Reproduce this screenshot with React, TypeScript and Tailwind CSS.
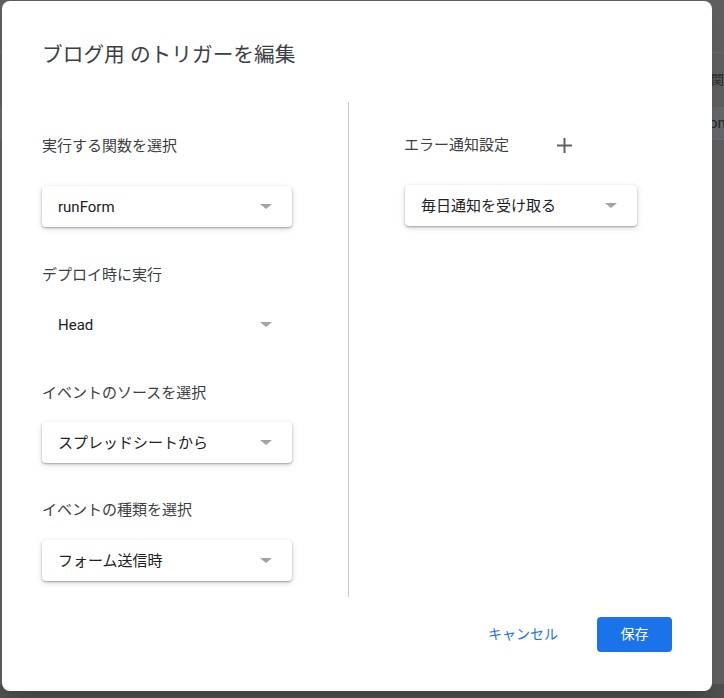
const font = "font-['Roboto','Noto_Sans_CJK_JP',sans-serif]";

function Caret() {
  return <span className="h-0 w-0 border-x-[6px] border-t-[5px] border-x-transparent border-t-[#a3a3a3]" />;
}

function Select({ value, width, boxed = true }: { value: string; width: string; boxed?: boolean }) {
  return (
    <div
      className={`flex h-[41px] items-center justify-between pl-4 pr-5 ${width} ${
        boxed ? "rounded-[4px] bg-white shadow-[0_1px_2px_rgba(0,0,0,0.3),0_2px_6px_rgba(0,0,0,0.15)]" : ""
      }`}
    >
      <span className="text-[15px] leading-5 text-[#202124]">{value}</span>
      <Caret />
    </div>
  );
}

function Label({ children, className = "" }: { children: React.ReactNode; className?: string }) {
  return <div className={`text-[15px] leading-5 text-[#3c4043] ${className}`}>{children}</div>;
}

export default function App() {
  return (
    <div className={`relative h-[698px] w-[724px] overflow-hidden bg-[#5e5e5e] ${font}`}>
      {/* dimmed page behind the dialog */}
      <div className="flex h-full flex-col">
        <div className="h-[53px] border-b border-[#6a6a6a]" />
        <div className="flex h-[54px] items-center whitespace-nowrap pl-[711px] text-[13px] text-[#2c2c2c]">関</div>
        <div className="flex h-[33px] items-center whitespace-nowrap border-b border-[#6a6a6a] bg-[#63666b] pl-[709px] text-[15px] text-[#262626]">
          on
        </div>
        <div className="flex-1" />
        <div className="h-[14px] bg-[#4f4f4f]" />
      </div>

      <div className="absolute left-[2px] top-[1px] flex h-[690px] w-[710px] flex-col rounded-[8px] bg-white px-[40px] pt-[40px] shadow-xl">
        <h1 className="text-[20.7px] leading-[28px] font-normal text-[#3c4043]">ブログ用 のトリガーを編集</h1>

        <div className="mt-[33px] flex">
          <div className="flex w-[306px] flex-col pb-4">
            <Label className="mt-[34px]">実行する関数を選択</Label>
            <div className="mt-[30px]">
              <Select value="runForm" width="w-[250px]" />
            </div>
            <Label className="mt-[38px]">デプロイ時に実行</Label>
            <div className="mt-[19px]">
              <Select value="Head" width="w-[250px]" boxed={false} />
            </div>
            <Label className="mt-[38px]">イベントのソースを選択</Label>
            <div className="mt-[19px]">
              <Select value="スプレッドシートから" width="w-[250px]" />
            </div>
            <Label className="mt-[37px]">イベントの種類を選択</Label>
            <div className="mt-[20px]">
              <Select value="フォーム送信時" width="w-[250px]" />
            </div>
          </div>

          <div className="w-px self-stretch bg-[#c8cacd]" />

          <div className="flex flex-col pl-[55px]">
            <div className="mt-[33px] flex items-center">
              <Label>エラー通知設定</Label>
              <svg className="ml-[48px]" width="15" height="15" viewBox="0 0 15 15">
                <path d="M7.5 0v15M0 7.5h15" stroke="#5f6368" strokeWidth="2" />
              </svg>
            </div>
            <div className="mt-[30px] pl-px">
              <Select value="毎日通知を受け取る" width="w-[232px]" />
            </div>
          </div>
        </div>

        <div className="mt-[20px] flex justify-end gap-[23px]">
          <button className="h-[35px] px-4 text-[14px] text-[#1a73e8]">キャンセル</button>
          <button className="flex h-[35px] w-[75px] items-center justify-center rounded-[4px] bg-[#1a73e8] text-[14px] text-white">
            保存
          </button>
        </div>
      </div>
    </div>
  );
}
